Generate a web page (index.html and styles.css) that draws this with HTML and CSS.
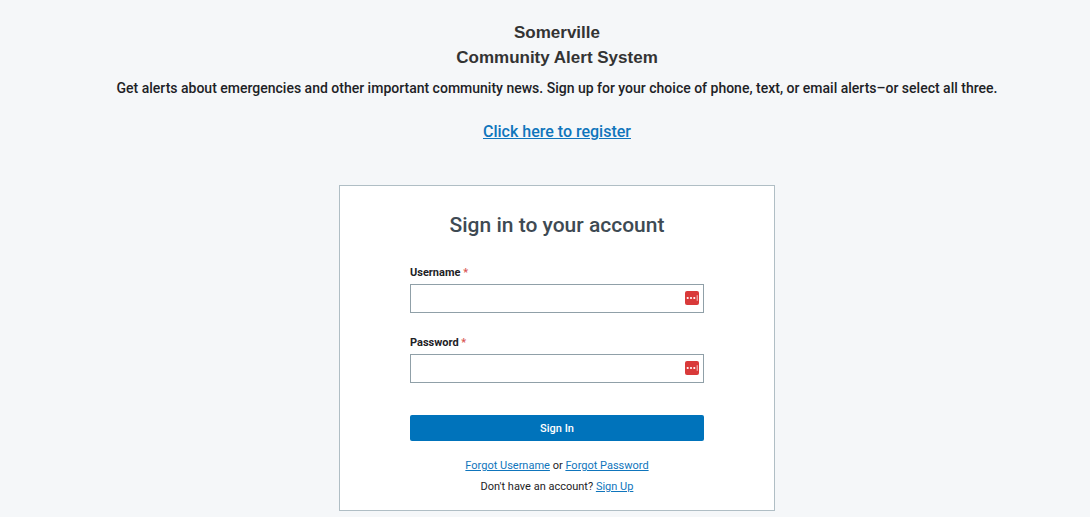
FILE: index.html
```html
<!DOCTYPE html>
<html lang="en">
<head>
    <meta charset="UTF-8">
    <meta name="viewport" content="width=device-width, initial-scale=1.0">
    <title>Somerville Community Alert System</title>
    <link rel="stylesheet" href="styles.css">
</head>
<body>

    <header class="intro">
        <h1>Somerville<br>Community Alert System</h1>
        <p>Get alerts about emergencies and other important community news. Sign up for your choice of phone, text, or email alerts–or select all three.</p>
        <a class="register-link" href="#register">Click here to register</a>
    </header>

    <main class="card">
        <h2>Sign in to your account</h2>
        <form>
            <div class="field">
                <label for="username">Username <span class="required">*</span></label>
                <div class="input-wrap">
                    <input type="text" id="username" name="username">
                    <svg class="fill-icon" viewBox="0 0 14 14" aria-hidden="true">
                        <rect width="14" height="14" rx="2" fill="#d93a3a"/>
                        <circle cx="2.7" cy="7" r="1.1" fill="#fff"/>
                        <circle cx="6" cy="7" r="1.1" fill="#fff"/>
                        <circle cx="9.3" cy="7" r="1.1" fill="#fff"/>
                        <rect x="11.8" y="4.2" width="0.7" height="5.6" fill="#fff"/>
                    </svg>
                </div>
            </div>
            <div class="field">
                <label for="password">Password <span class="required">*</span></label>
                <div class="input-wrap">
                    <input type="password" id="password" name="password">
                    <svg class="fill-icon" viewBox="0 0 14 14" aria-hidden="true">
                        <rect width="14" height="14" rx="2" fill="#d93a3a"/>
                        <circle cx="2.7" cy="7" r="1.1" fill="#fff"/>
                        <circle cx="6" cy="7" r="1.1" fill="#fff"/>
                        <circle cx="9.3" cy="7" r="1.1" fill="#fff"/>
                        <rect x="11.8" y="4.2" width="0.7" height="5.6" fill="#fff"/>
                    </svg>
                </div>
            </div>
            <button type="submit" class="sign-in-btn">Sign In</button>
        </form>
        <p class="help"><a href="#username-help">Forgot Username</a> or <a href="#password-help">Forgot Password</a></p>
        <p class="help">Don't have an account? <a href="#signup">Sign Up</a></p>
    </main>

</body>
</html>
```
FILE: styles.css
```css
* {
    box-sizing: border-box;
}
body {
    margin: 0;
    padding: 20px 0 6px 24px;
    background-color: #f5f7f9;
    color: #1d2226;
    font-family: Roboto, Arial, sans-serif;
}
h1, h2, p {
    margin: 0;
}
a {
    color: #0f75bc;
}
.intro {
    text-align: center;
}
.intro h1 {
    color: #333;
    font-family: "Liberation Sans", Arial, sans-serif;
    font-size: 17px;
    line-height: 25px;
}
.intro p {
    margin-top: 6px;
    font-size: 14px;
    font-weight: 500;
    line-height: 24px;
}
.register-link {
    display: inline-block;
    margin-top: 20px;
    font-size: 16px;
    font-weight: 500;
    line-height: 24px;
}
.card {
    max-width: 436px;
    margin: 41px auto 0;
    padding: 24px 70px 13px;
    background-color: #fff;
    border: 1px solid #b0bec5;
}
.card h2 {
    margin-bottom: 25px;
    color: #3e4a53;
    font-size: 21px;
    font-weight: 500;
    line-height: 30px;
    text-align: center;
}
.field {
    margin-bottom: 22px;
}
.field label {
    display: block;
    margin-bottom: 3px;
    font-size: 11px;
    font-weight: 700;
    line-height: 16px;
}
.required {
    color: #d9534f;
    font-weight: 500;
}
.input-wrap {
    position: relative;
}
.input-wrap input {
    display: block;
    width: 100%;
    height: 29px;
    padding: 4px 24px 4px 8px;
    background-color: #fff;
    border: 1px solid #90a0a8;
    font-family: inherit;
    font-size: 11px;
}
.fill-icon {
    position: absolute;
    top: 7px;
    right: 5px;
    width: 14px;
    height: 14px;
}
.sign-in-btn {
    display: block;
    width: 100%;
    height: 26px;
    margin: 32px 0 14px;
    padding: 0;
    background-color: #0073bb;
    border: none;
    border-radius: 2px;
    color: #fff;
    cursor: pointer;
    font-family: inherit;
    font-size: 11px;
    font-weight: 500;
}
.help {
    font-size: 11px;
    line-height: 21px;
    text-align: center;
}
```
